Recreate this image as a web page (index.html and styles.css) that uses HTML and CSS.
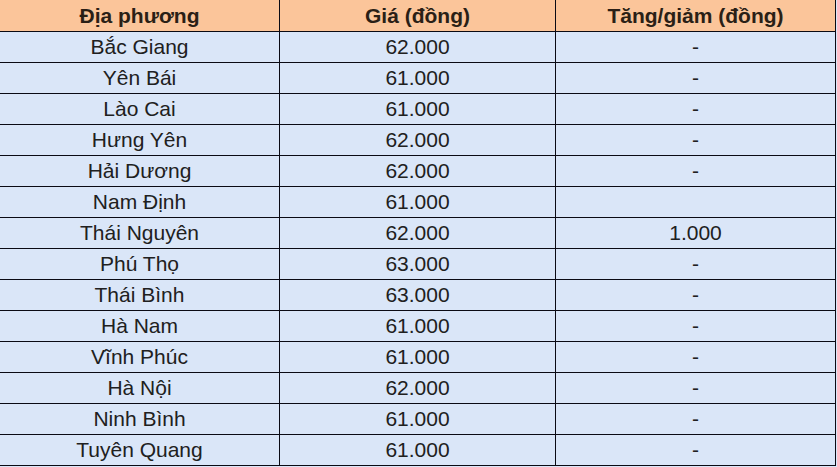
FILE: index.html
```html
<!DOCTYPE html>
<html lang="vi">
<head>
<meta charset="utf-8">
<title>Giá heo hơi</title>
<link rel="stylesheet" href="styles.css">
</head>
<body>
<table class="price-table">
  <thead>
    <tr>
      <th class="col-a">Địa phương</th>
      <th class="col-b">Giá (đồng)</th>
      <th class="col-c">Tăng/giảm (đồng)</th>
    </tr>
  </thead>
  <tbody>
    <tr><td>Bắc Giang</td><td>62.000</td><td>-</td></tr>
    <tr><td>Yên Bái</td><td>61.000</td><td>-</td></tr>
    <tr><td>Lào Cai</td><td>61.000</td><td>-</td></tr>
    <tr><td>Hưng Yên</td><td>62.000</td><td>-</td></tr>
    <tr><td>Hải Dương</td><td>62.000</td><td>-</td></tr>
    <tr><td>Nam Định</td><td>61.000</td><td></td></tr>
    <tr><td>Thái Nguyên</td><td>62.000</td><td>1.000</td></tr>
    <tr><td>Phú Thọ</td><td>63.000</td><td>-</td></tr>
    <tr><td>Thái Bình</td><td>63.000</td><td>-</td></tr>
    <tr><td>Hà Nam</td><td>61.000</td><td>-</td></tr>
    <tr><td>Vĩnh Phúc</td><td>61.000</td><td>-</td></tr>
    <tr><td>Hà Nội</td><td>62.000</td><td>-</td></tr>
    <tr><td>Ninh Bình</td><td>61.000</td><td>-</td></tr>
    <tr><td>Tuyên Quang</td><td>61.000</td><td>-</td></tr>
  </tbody>
</table>
</body>
</html>
```
FILE: styles.css
```css
html, body {
  margin: 0;
  padding: 0;
}
body {
  background: #dae6f8;
  font-family: "Liberation Sans", Arial, sans-serif;
}
.price-table {
  border-collapse: separate;
  border-spacing: 0;
  table-layout: fixed;
  width: 836px;
  font-size: 21px;
  color: #202020;
}
.price-table th,
.price-table td {
  box-sizing: border-box;
  padding: 0;
  text-align: center;
  border-right: 1px solid #0a0a14;
  border-bottom: 1px solid #0a0a14;
  white-space: nowrap;
}
.price-table th {
  background: #fbc59a;
  font-weight: bold;
  line-height: 31px;
  color: #2a1f16;
}
.price-table td {
  background: #dae6f8;
  line-height: 30px;
}
.col-a { width: 280px; }
.col-b { width: 276px; }
.col-c { width: 280px; }
```
